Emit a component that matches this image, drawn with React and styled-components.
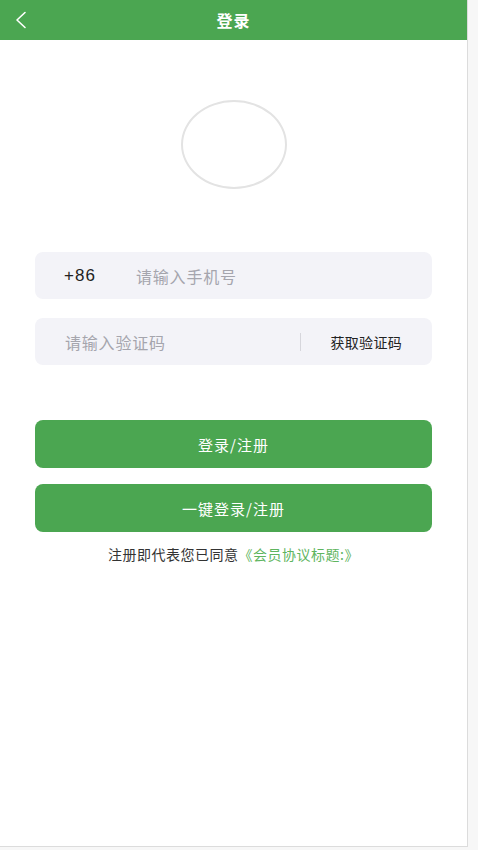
import styled, { createGlobalStyle } from "styled-components";

const GlobalStyle = createGlobalStyle`
    html, body {
        margin: 0;
        padding: 0;
        background: #f7f7f7;
        font-family: "Noto Sans CJK SC", "Liberation Sans", sans-serif;
    }
`;

const GREEN = "#4ba651";

/**
 * Phone frame, with the thin grey edge seen at right and bottom
 */
const Screen = styled.div`
    width: 467px;
    height: 846px;
    background: #fff;
    border-right: 1px solid #dcdcdc;
    border-bottom: 1px solid #dcdcdc;
    display: flex;
    flex-direction: column;
`;

const Header = styled.header`
    height: 40px;
    background: ${GREEN};
    display: grid;
    grid-template-columns: 60px 1fr 60px;
    align-items: center;
    color: #fff;
`;

const BackButton = styled.button`
    border: none;
    background: none;
    padding: 0 0 0 14px;
    display: flex;
    align-items: center;
    height: 40px;
    cursor: pointer;
`;

const Title = styled.h1`
    margin: 0;
    text-align: center;
    font-size: 16px;
    font-weight: 700;
    letter-spacing: 1px;
`;

const Body = styled.main`
    display: flex;
    flex-direction: column;
    align-items: center;
    padding: 60px 35px 0;
`;

const Avatar = styled.div`
    width: 102px;
    height: 85px;
    border-radius: 50%;
    border: 2px solid #e3e3e3;
    margin-bottom: 63px;
`;

const Form = styled.div`
    width: 100%;
    display: flex;
    flex-direction: column;
    gap: 19px;
`;

const Field = styled.div`
    height: 47px;
    border-radius: 8px;
    background: #f3f3f8;
    display: flex;
    align-items: center;
    padding: 0 ${p => p.$right || 0}px 0 ${p => p.$left}px;
    font-size: 16px;
    letter-spacing: 0.8px;
`;

const Prefix = styled.span`
    color: #222;
    width: 72px;
    font-family: "Liberation Sans", sans-serif;
    font-size: 17px;
    letter-spacing: 1px;
`;

const Placeholder = styled.span`
    color: #a5a5ad;
    flex: 1;
`;

const Divider = styled.span`
    width: 1px;
    height: 18px;
    background: #d6d6dc;
    margin-right: 30px;
`;

const CodeLink = styled.span`
    color: #222;
    font-size: 14px;
    letter-spacing: 0.3px;
`;

const Actions = styled.div`
    width: 100%;
    display: flex;
    flex-direction: column;
    gap: 16px;
    margin-top: 55px;
`;

const Button = styled.button`
    height: 48px;
    width: 100%;
    border: none;
    border-radius: 8px;
    background: ${GREEN};
    color: #fff;
    font-size: 15px;
    letter-spacing: 1px;
    font-family: inherit;
    cursor: pointer;
`;

const Agreement = styled.p`
    margin: 12px 0 0;
    font-size: 14px;
    letter-spacing: 0.5px;
    color: #333;
    text-align: center;
`;

const AgreementLink = styled.span`
    color: #5fb55f;
`;

const App = () => {
    return (
        <>
            <GlobalStyle />
            <Screen>
                <Header>
                    <BackButton>
                        <svg width="14" height="18" viewBox="0 0 14 18" fill="none">
                            <path d="M11 1.5 L3 9 L11 16.5" stroke="#fff" strokeWidth="1.6" strokeLinecap="round" strokeLinejoin="round" />
                        </svg>
                    </BackButton>
                    <Title>登录</Title>
                    <span />
                </Header>

                <Body>
                    <Avatar />

                    <Form>
                        <Field $left={29}>
                            <Prefix>+86</Prefix>
                            <Placeholder>请输入手机号</Placeholder>
                        </Field>

                        <Field $left={30} $right={30}>
                            <Placeholder>请输入验证码</Placeholder>
                            <Divider />
                            <CodeLink>获取验证码</CodeLink>
                        </Field>
                    </Form>

                    <Actions>
                        <Button>登录/注册</Button>
                        <Button>一键登录/注册</Button>
                    </Actions>

                    <Agreement>
                        注册即代表您已同意<AgreementLink>《会员协议标题:》</AgreementLink>
                    </Agreement>
                </Body>
            </Screen>
        </>
    );
};

export default App;
